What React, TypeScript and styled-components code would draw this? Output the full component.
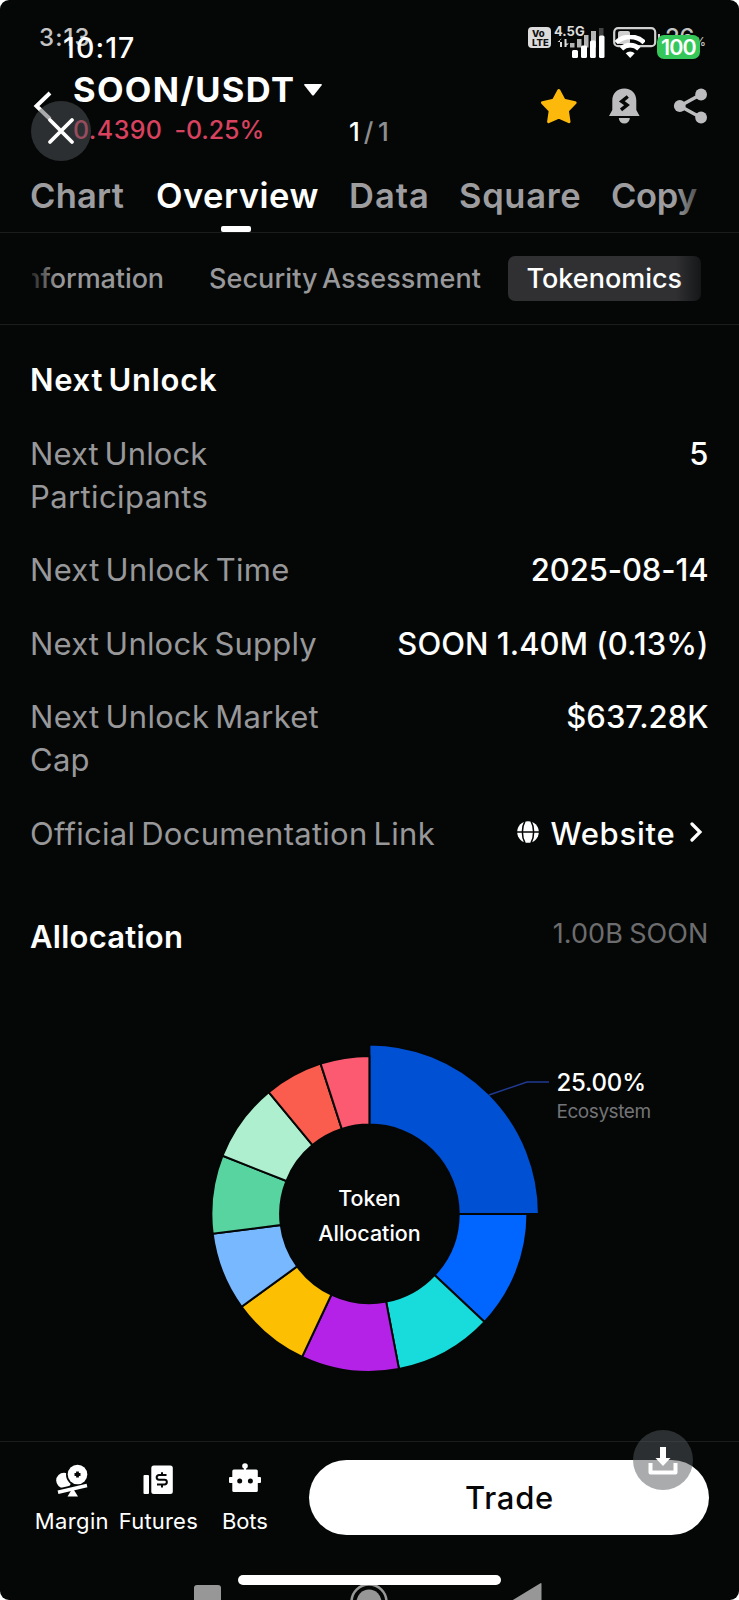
import React from 'react';
import styled, { createGlobalStyle } from 'styled-components';

const Global = createGlobalStyle`
  *, *::before, *::after { box-sizing: border-box; }
  body { margin: 0; background: #fff; font-family: Inter, "Liberation Sans", sans-serif; }
  svg { display: block; }
`;

const Screen = styled.main`
  position: relative;
  width: 739px;
  height: 1600px;
  display: flex;
  flex-direction: column;
  overflow: hidden;
  border-radius: 9px;
  background: #050706;
  color: #fff;
`;

/* ---------- status bar of the captured phone ---------- */
const StatusBar = styled.div`
  height: 72px;
  flex: none;
  padding: 27px 30px 0 39px;
  display: flex;
  align-items: flex-start;
  color: #c4c4c4;
`;
const Clock = styled.span`
  font-size: 24px;
  line-height: 22px;
  font-weight: 500;
  letter-spacing: 1.1px;
  margin-right: auto;
`;
const VoLte = styled.span`
  width: 23px;
  height: 21px;
  margin-right: 3px;
  border-radius: 4px;
  background: #dcdcdc;
  color: #111;
  font-size: 9.5px;
  line-height: 9px;
  font-weight: 800;
  padding: 2px 0 0 4px;
`;
const Network = styled.span`
  width: 52px;
  font-size: 13px;
  line-height: 9px;
  font-weight: 700;
  color: #dcdcdc;
`;
const BatteryLevel = styled.span`
  width: 44px;
  margin-left: 3px;
  font-size: 24px;
  line-height: 21px;
  font-weight: 500;
  letter-spacing: -0.5px;
  white-space: nowrap;
  small { font-size: 12px; }
`;

/* ---------- status bar of the viewer lying on top ---------- */
const ViewerStatus = styled.div`
  position: absolute;
  inset: 0 0 auto 0;
  height: 72px;
  padding: 35px 39px 0 63px;
  display: flex;
  align-items: flex-start;
`;
const ViewerClock = styled.span`
  font-size: 28.5px;
  line-height: 25px;
  font-weight: 500;
  letter-spacing: 1.1px;
  margin-right: auto;
`;
const ViewerBattery = styled.span`
  width: 43px;
  height: 24px;
  margin-left: 12px;
  border-radius: 7px;
  background: #35c759;
  font-size: 21.5px;
  line-height: 24px;
  font-weight: 600;
  letter-spacing: -0.9px;
  text-align: center;
`;
const RoundButton = styled.button<{ $x: number; $y: number }>`
  position: absolute;
  left: ${p => p.$x}px;
  top: ${p => p.$y}px;
  width: 60px;
  height: 60px;
  padding: 0;
  border: 0;
  border-radius: 50%;
  background: rgba(84, 87, 92, 0.5);
  display: grid;
  place-items: center;
`;
const PageCounter = styled.div`
  position: absolute;
  left: 349px;
  top: 117px;
  font-size: 26px;
  line-height: 30px;
  font-weight: 500;
  letter-spacing: 4px;
  span { color: #8d8e8f; letter-spacing: 4.5px; }
`;
const HomeIndicator = styled.div`
  position: absolute;
  left: 238px;
  top: 1575px;
  width: 263px;
  height: 10px;
  border-radius: 5px;
  background: #fff;
`;

/* ---------- header ---------- */
const Header = styled.header`
  height: 88px;
  flex: none;
  display: flex;
  align-items: flex-start;
  padding: 0 30px 0 33px;
`;
const Back = styled.div`
  width: 40px;
  padding-top: 19px;
`;
const Pair = styled.div`
  display: flex;
  flex-direction: column;
  margin-right: auto;
`;
const Symbol = styled.h1`
  margin: 0;
  display: flex;
  align-items: center;
  gap: 9px;
  font-size: 34.5px;
  line-height: 36px;
  font-weight: 700;
  letter-spacing: 1.35px;
`;
const Price = styled.div`
  display: flex;
  gap: 12px;
  margin-top: 4px;
  font-size: 25px;
  line-height: 36px;
  font-weight: 500;
  letter-spacing: 0.4px;
  color: #d8425f;
  span + span { letter-spacing: -0.1px; }
`;
const Actions = styled.div`
  display: flex;
  gap: 26px;
  padding-top: 14px;
`;

/* ---------- tabs ---------- */
const Tabs = styled.nav`
  position: relative;
  height: 73px;
  flex: none;
  display: flex;
  padding: 13px 0 0 30px;
  border-bottom: 1px solid #1b1c1c;
  white-space: nowrap;
`;
const Tab = styled.div<{ $width: number; $spacing: number; $active?: boolean }>`
  width: ${p => p.$width}px;
  flex: none;
  font-size: 34.5px;
  line-height: 46px;
  font-weight: 600;
  letter-spacing: ${p => p.$spacing}px;
  color: ${p => (p.$active ? '#fff' : '#9d9d9f')};
  ${p => p.$active && `
    &::after {
      content: '';
      display: block;
      width: 30px;
      height: 6px;
      margin: 7px 0 0 65px;
      border-radius: 2px;
      background: #fff;
    }`}
`;
const EdgeFade = styled.div<{ $side: 'left' | 'right'; $left: number; $width: number }>`
  position: absolute;
  top: 8px;
  bottom: 8px;
  left: ${p => p.$left}px;
  width: ${p => p.$width}px;
  background: linear-gradient(to ${p => p.$side}, rgba(5, 7, 6, 0), rgba(5, 7, 6, 0.8));
`;
const SubTabs = styled.nav`
  position: relative;
  height: 92px;
  flex: none;
  display: flex;
  align-items: center;
  padding: 0 38px 1px 32px;
  border-bottom: 1px solid #1b1c1c;
  font-size: 27px;
  font-weight: 500;
  line-height: 45px;
  white-space: nowrap;
  color: #98989a;
`;
const Clipped = styled.div`
  width: 132px;
  margin-right: 45px;
  overflow: hidden;
  display: flex;
  justify-content: flex-end;
  letter-spacing: -0.1px;
`;
const SubTab = styled.div`
  letter-spacing: 0.08px;
  word-spacing: -3px;
`;
const Pill = styled.div`
  margin-left: auto;
  width: 193px;
  height: 45px;
  padding-left: 18.5px;
  border-radius: 7px;
  background: #303033;
  color: #fff;
`;

/* ---------- content ---------- */
const Content = styled.section`
  flex: 1;
  padding: 33px 30.5px 0 30px;
`;
const Heading = styled.h2<{ $spacing: number }>`
  margin: 0;
  font-size: 31px;
  line-height: 44px;
  font-weight: 600;
  letter-spacing: ${p => p.$spacing}px;
  word-spacing: -3px;
`;
const Facts = styled.dl`
  margin: 29.7px 0 59.5px;
  display: flex;
  flex-direction: column;
  gap: 29.6px;
`;
const Fact = styled.div`
  display: flex;
  justify-content: space-between;
  font-size: 31px;
  line-height: 43.6px;
`;
const Label = styled.dt<{ $spacing: number }>`
  color: #98989a;
  letter-spacing: ${p => p.$spacing}px;
  word-spacing: -3px;
  white-space: pre-line;
  span { letter-spacing: 0.4px; }
`;
const Value = styled.dd<{ $spacing?: number }>`
  margin: 0;
  font-weight: 500;
  letter-spacing: ${p => p.$spacing ?? 0}px;
`;
const Link = styled.dd`
  margin: 0;
  display: flex;
  align-items: center;
  padding-right: 6px;
  font-weight: 500;
  letter-spacing: 0.75px;
  svg:first-child { margin: -3px 11px 0 0; }
  svg:last-child { margin: -3px 0 0 13px; }
`;
const AllocationHead = styled.div`
  display: flex;
  justify-content: space-between;
`;
const Total = styled.span`
  font-size: 27px;
  line-height: 38px;
  color: #6d6d6f;
  letter-spacing: 0.1px;
  word-spacing: -1.5px;
`;
const Chart = styled.svg`
  margin: 0 -31px 0 -30px;
`;

/* ---------- bottom bar ---------- */
const BottomBar = styled.footer`
  height: 139px;
  flex: none;
  display: flex;
  align-items: flex-start;
  padding: 18px 30px 0 28.6px;
  border-top: 1px solid #1b1c1c;
`;
const Shortcut = styled.div<{ $spacing: number }>`
  width: 86.5px;
  padding-top: 3px;
  display: flex;
  flex-direction: column;
  align-items: center;
  gap: 10px;
  font-size: 22px;
  line-height: 28px;
  letter-spacing: ${p => p.$spacing}px;
`;
const TradeButton = styled.button`
  margin-left: auto;
  width: 400px;
  height: 75px;
  padding: 0 0 0 1px;
  border: 0;
  border-radius: 38px;
  background: #fff;
  color: #060606;
  font: 500 31px/76px Inter, "Liberation Sans", sans-serif;
  letter-spacing: 0.7px;
`;
const SystemNav = styled.div`
  height: 20px;
  flex: none;
  display: flex;
  gap: 119px;
  padding-left: 187px;
  overflow: hidden;
  svg { flex: none; }
`;

const slices: [number, string][] = [
  [25, '#0050d4'], [12, '#0066ff'], [10, '#18dcdc'], [10, '#b322e6'], [8, '#fcbf02'],
  [8, '#78b8ff'], [8, '#58d4a0'], [8, '#adefcf'], [6, '#fa5c4d'], [5, '#fb5a70'],
];
const CX = 369.4;
const CY = 254.9;
const point = (r: number, share: number) => {
  const a = (share / 100) * Math.PI * 2;
  return `${CX + r * Math.sin(a)} ${CY - r * Math.cos(a)}`;
};

function Donut() {
  let start = 0;
  return (
    <Chart width="739" height="481" viewBox="0 0 739 481">
      {slices.map(([share, color], i) => {
        const from = start;
        const to = (start += share);
        const r = i === 0 ? 169.5 : 158;
        return (
          <path
            key={color}
            d={`M${point(r, from)}A${r} ${r} 0 0 1 ${point(r, to)}L${point(89.3, to)}A89.3 89.3 0 0 0 ${point(89.3, from)}Z`}
            fill={color}
            stroke="#050706"
            strokeWidth="2"
          />
        );
      })}
      <path d="M489 136L527 123H549" fill="none" stroke="#203a94" strokeWidth="1.5" />
      <g fontFamily="Inter, sans-serif">
        <text x="556.5" y="132" fontSize="24" fontWeight="500" letterSpacing="-0.2" fill="#fff">25.00%</text>
        <text x="556.5" y="159" fontSize="19" letterSpacing="-0.45" fill="#737477">Ecosystem</text>
        <g fontSize="21.5" fontWeight="500" fill="#fff" textAnchor="middle">
          <text x="369.5" y="247">Token</text>
          <text x="369.5" y="281.5">Allocation</text>
        </g>
      </g>
    </Chart>
  );
}

function Bars() {
  return (
    <svg width="7" height="21" viewBox="0 0 7 21" overflow="visible" fill="#b4b4b4">
      <g transform="translate(-36 0)">
        <rect x="0" y="16" width="4.5" height="4.5" />
        <rect x="7" y="12" width="4.5" height="8.5" />
        <rect x="14" y="8" width="4.5" height="12.5" />
        <rect x="21" y="4" width="5" height="16.5" />
        <rect x="29" y="1" width="4.5" height="19.5" fill="#444" />
      </g>
    </svg>
  );
}

export default function App() {
  return (
    <>
      <Global />
      <Screen>
        <StatusBar>
          <Clock>3:13</Clock>
          <VoLte>Vo<br />LTE</VoLte>
          <Network>
            4.5G
            <svg width="52" height="12" viewBox="0 0 52 12" fill="#dcdcdc">
              <path d="M6 3v8h2V3zM3.5 6 8 2.5V6zM10.5 3v8h2V3zM10.5 11l4.5-3.5h-4.5z" />
            </svg>
          </Network>
          <Bars />
          <svg width="49" height="21" viewBox="0 0 49 21">
            <rect x="1.2" y="1.2" width="41" height="18" rx="4" fill="none" stroke="#d0d0d0" strokeWidth="2.2" />
            <rect x="5" y="4" width="12" height="13" rx="2" fill="#d0d0d0" />
            <rect x="45" y="7" width="2" height="6" fill="#d0d0d0" />
          </svg>
          <BatteryLevel>26<small>%</small></BatteryLevel>
        </StatusBar>

        <Header>
          <Back>
            <svg width="20" height="30" viewBox="0 0 20 30">
              <path d="M17 2 3.5 15 17 28" fill="none" stroke="#fff" strokeWidth="4" />
            </svg>
          </Back>
          <Pair>
            <Symbol>
              SOON/USDT
              <svg width="18" height="12" viewBox="0 0 18 12">
                <path d="M1 0h16q1.5 0 .5 1.5L10 11q-1 1-2 0L.5 1.5Q-.5 0 1 0z" fill="#fff" />
              </svg>
            </Symbol>
            <Price><span>0.4390</span><span>-0.25%</span></Price>
          </Pair>
          <Actions>
            <svg width="40" height="40" viewBox="0 0 40 40">
              <path d="M17 4.5 22.2 14.2 33.3 16.6 25.6 24.8 27.2 35.7 17 31.2 6.8 35.7 8.4 24.8.7 16.6 11.8 14.2z" transform="translate(.8 0)" fill="#fcb90b" stroke="#fcb90b" strokeWidth="3" strokeLinejoin="round" overflow="visible" />
            </svg>
            <svg width="40" height="40" viewBox="0 0 40 40" fill="#bdbdbf">
              <g transform="translate(-2.7 0)">
                <path d="M20 2.5c7.5 0 12 5 12 12V24l3.3 6H4.7L8 24V14.5c0-7 4.5-12 12-12z" />
                <path d="M14.5 32h11a5.5 5.5 0 0 1-11 0z" />
                <path d="M23.5 10.5 17.500 15.300 22.700 19 16.700 23.800" fill="none" stroke="#050706" strokeWidth="3.500" />
              </g>
            </svg>
            <svg width="36" height="40" viewBox="0 0 36 40" fill="#bdbdbf">
              <g transform="translate(-1.7 0)">
                <path d="M29.5 8.5 8.5 20l21 11.5" fill="none" stroke="#bdbdbf" strokeWidth="3.4" />
                <circle cx="29.8" cy="8.5" r="5.9" />
                <circle cx="8.5" cy="20" r="5.9" />
                <circle cx="29.8" cy="31.5" r="5.9" />
              </g>
            </svg>
          </Actions>
        </Header>

        <Tabs>
          <Tab $width={126} $spacing={0.25}>Chart</Tab>
          <Tab $width={193} $spacing={0.5} $active>Overview</Tab>
          <Tab $width={110} $spacing={1}>Data</Tab>
          <Tab $width={152} $spacing={0.7}>Square</Tab>
          <Tab $width={100} $spacing={-0.4}>Copy</Tab>
          <EdgeFade $side="right" $left={675} $width={34} />
        </Tabs>
        <SubTabs>
          <Clipped>Information</Clipped>
          <SubTab>Security Assessment</SubTab>
          <Pill>Tokenomics</Pill>
          <EdgeFade $side="left" $left={31} $width={26} />
          <EdgeFade $side="right" $left={676} $width={32} />
        </SubTabs>

        <Content>
          <Heading $spacing={0.7}>Next Unlock</Heading>
          <Facts>
            <Fact>
              <Label $spacing={0.1}>{'Next Unlock\n'}<span>Participants</span></Label>
              <Value>5</Value>
            </Fact>
            <Fact>
              <Label $spacing={0.3}>Next Unlock Time</Label>
              <Value $spacing={-0.1}>2025-08-14</Value>
            </Fact>
            <Fact>
              <Label $spacing={0.2}>Next Unlock Supply</Label>
              <Value $spacing={0.05}>SOON 1.40M (0.13%)</Value>
            </Fact>
            <Fact>
              <Label $spacing={0.27}>{'Next Unlock Market\nCap'}</Label>
              <Value>$637.28K</Value>
            </Fact>
            <Fact>
              <Label $spacing={0.27}>Official Documentation Link</Label>
              <Link>
                <svg width="22" height="22" viewBox="0 0 22 22">
                  <circle cx="11" cy="11" r="10.8" fill="#fff" />
                  <path d="M0 11h22M8 0C4.5 6 4.5 16 8 22M14 0c3.5 6 3.5 16 0 22" fill="none" stroke="#050706" strokeWidth="1.5" />
                </svg>
                Website
                <svg width="14" height="20" viewBox="0 0 14 20">
                  <path d="M3 2l8 8-8 8" fill="none" stroke="#fff" strokeWidth="3.2" strokeLinecap="round" />
                </svg>
              </Link>
            </Fact>
          </Facts>
          <AllocationHead>
            <Heading $spacing={0.25}>Allocation</Heading>
            <Total>1.00B SOON</Total>
          </AllocationHead>
          <Donut />
        </Content>

        <BottomBar>
          <Shortcut $spacing={0.4}>
            <svg width="36" height="34" viewBox="0 0 36 34" fill="#fff">
              <circle cx="10" cy="17.5" r="7.8" />
              <path d="M2 29.5 34 22v6L2 34z" fill="#050706" />
              <path d="M2 27.2 34 20" stroke="#050706" strokeWidth="2.5" />
              <circle cx="23.5" cy="11.5" r="11.5" fill="#050706" />
              <circle cx="23.5" cy="11.5" r="9.8" />
              <path d="M4 29.3 33 22.5" stroke="#fff" strokeWidth="3.6" />
              <path d="M18.7 25 24 33.5H13.5z" />
              <path d="M23.5 8.5v6M20.5 11.5h6" stroke="#050706" strokeWidth="2.8" />
            </svg>
            Margin
          </Shortcut>
          <Shortcut $spacing={0.2}>
            <svg width="32" height="34" viewBox="0 0 32 34" fill="#fff">
              <rect x="1.5" y="12" width="5.5" height="19" rx="1" />
              <rect x="9.3" y="2.5" width="21.5" height="28.5" rx="2.5" />
              <path d="M24.5 12h-7.5a2.3 2.3 0 0 0 0 4.7h5.5a2.3 2.3 0 0 1 0 4.7H15M20 9.3v2.7M20 21.4v3" fill="none" stroke="#050706" strokeWidth="2" />
            </svg>
            Futures
          </Shortcut>
          <Shortcut $spacing={-0.15}>
            <svg width="34" height="34" viewBox="0 0 34 34" fill="#fff">
              <circle cx="17" cy="3" r="2.8" />
              <path d="M16 4h2v4h-2z" />
              <rect x="4.3" y="6.5" width="25.5" height="22.5" rx="1.5" />
              <rect x="1" y="14" width="32" height="6" rx="1" />
              <circle cx="11.7" cy="18" r="2.5" fill="#050706" />
              <circle cx="22.4" cy="18" r="2.5" fill="#050706" />
            </svg>
            Bots
          </Shortcut>
          <TradeButton>Trade</TradeButton>
        </BottomBar>
        <SystemNav>
          <svg width="40" height="40" viewBox="0 0 40 40">
            <rect x="7" y="5" width="27" height="27" rx="3" fill="#979797" />
          </svg>
          <svg width="46" height="44" viewBox="0 0 46 44" fill="none">
            <circle cx="23" cy="22" r="17.5" stroke="#979797" strokeWidth="2.5" />
            <circle cx="23" cy="22" r="12.5" fill="#979797" />
          </svg>
          <svg width="40" height="40" viewBox="0 0 40 40">
            <path d="M29 3.5q1-1 1.5 0V38L1 20.5z" fill="#979797" />
          </svg>
        </SystemNav>

        <ViewerStatus>
          <ViewerClock>10:17</ViewerClock>
          <svg width="73" height="24" viewBox="0 0 73 24" fill="#fff">
            <rect x="0" y="15" width="6" height="8" rx="1.5" />
            <rect x="9" y="10.5" width="6" height="12.5" rx="1.5" />
            <rect x="18" y="5.5" width="5.8" height="17.5" rx="1.5" />
            <rect x="27" y="0.5" width="5.5" height="22.5" rx="1.5" />
            <g fill="none" stroke="#fff" strokeWidth="4.8">
              <path d="M44.2 7.6a20 20 0 0 1 28 0" />
              <path d="M49.5 13.7a12.5 12.5 0 0 1 17.4 0" />
            </g>
            <path d="M58.2 23l-4.5-4.8a6.5 6.5 0 0 1 9 0z" />
          </svg>
          <ViewerBattery>100</ViewerBattery>
        </ViewerStatus>
        <PageCounter>1<span>/1</span></PageCounter>
        <RoundButton $x={30.5} $y={101}>
          <svg width="28" height="28" viewBox="0 0 28 28">
            <path d="M3 3l22 22M25 3L3 25" stroke="#fff" strokeWidth="3.8" strokeLinecap="round" />
          </svg>
        </RoundButton>
        <HomeIndicator />
        <RoundButton $x={633} $y={1430}>
          <svg width="30" height="30" viewBox="0 0 30 30">
            <path d="M2.5 18v9.5h25V18" fill="none" stroke="#fff" strokeWidth="4" strokeLinejoin="round" />
            <path d="M12 2h6v11h4.500L15 21 7.500 13H12z" fill="#fff" />
          </svg>
        </RoundButton>
      </Screen>
    </>
  );
}
